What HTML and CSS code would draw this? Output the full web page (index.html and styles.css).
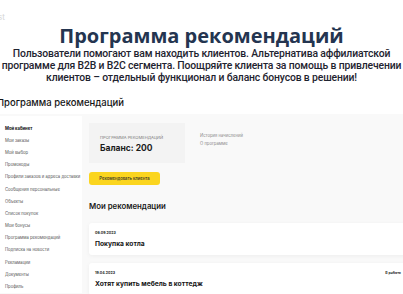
FILE: index.html
```html
<!DOCTYPE html>
<html lang="ru">
<head>
<meta charset="utf-8">
<link rel="stylesheet" href="styles.css">
</head>
<body>
<div class="page">
  <div class="crumb">st</div>
  <h1 class="title">Программа рекомендаций</h1>
  <p class="lead">Пользователи помогают вам находить клиентов. Альтернатива аффилиатской<br>программе для B2B и B2C сегмента. Поощряйте клиента за помощь в привлечении<br>клиентов – отдельный функционал и баланс бонусов в решении!</p>
  <h2 class="section">Программа рекомендаций</h2>
  <div class="layout">
    <nav class="sidebar">
      <a class="nav-item active">Мой кабинет</a>
      <a class="nav-item">Мои заказы</a>
      <a class="nav-item">Мой выбор</a>
      <a class="nav-item">Промокоды</a>
      <a class="nav-item">Профили заказов и адреса доставки</a>
      <a class="nav-item">Сообщения персональные</a>
      <a class="nav-item">Объекты</a>
      <a class="nav-item">Список покупок</a>
      <a class="nav-item">Мои бонусы</a>
      <a class="nav-item">Программа рекомендаций</a>
      <a class="nav-item">Подписка на новости</a>
      <a class="nav-item">Рекламации</a>
      <a class="nav-item">Документы</a>
      <a class="nav-item">Профиль</a>
    </nav>
    <main class="main">
      <div class="top-row">
        <div class="balance">
          <div class="balance-label">Программа рекомендаций</div>
          <div class="balance-value">Баланс: 200</div>
        </div>
        <div class="links">
          <a class="link">История начислений</a>
          <a class="link">О программе</a>
        </div>
      </div>
      <button class="btn">Рекомендовать клиента</button>
      <h3 class="subhead">Мои рекомендации</h3>
      <div class="cards">
        <div class="card">
          <div class="card-meta"><span class="date">06.09.2023</span></div>
          <div class="card-title">Покупка котла</div>
        </div>
        <div class="card">
          <div class="card-meta"><span class="date">19.04.2023</span><span class="status">В работе</span></div>
          <div class="card-title">Хотят купить мебель в коттедж</div>
        </div>
      </div>
    </main>
  </div>
</div>
</body>
</html>
```
FILE: styles.css
```css
* { box-sizing: border-box; margin: 0; padding: 0; }
html, body { width: 403px; height: 294px; overflow: hidden; background: #fff; }
body { font-family: Inter, "Noto Sans", sans-serif; color: #1d1d1f; }

.page { width: 403px; }

.crumb {
  height: 24px;
  padding-top: 12px;
  font-size: 8px;
  line-height: 10px;
  color: #d6d6d6;
  margin-left: -2px;
}

.title {
  font-family: "Open Sans", "Noto Sans", sans-serif;
  font-weight: 700;
  font-size: 20px;
  line-height: 24px;
  text-align: center;
  color: #243550;
}

.lead {
  margin-top: 0;
  font-family: Roboto, "Noto Sans", sans-serif;
  font-weight: 500;
  font-size: 10.4px;
  line-height: 12px;
  text-align: center;
  color: #1f2430;
  letter-spacing: -0.15px;
  white-space: nowrap;
}

.section {
  margin-top: 12px;
  margin-left: -3px;
  font-weight: 500;
  font-size: 9.5px;
  line-height: 14px;
  color: #151515;
}

.layout {
  margin-top: 4px;
  display: flex;
  align-items: flex-start;
  background: #f9f9f9;
  width: 420px;
  min-height: 200px;
}

.sidebar {
  width: 82px;
  flex: none;
  background: #fff;
  margin-top: 2px;
  padding-top: 6px;
  display: flex;
  flex-direction: column;
}

.nav-item {
  height: 12.2px;
  padding-left: 5px;
  font-size: 4.2px;
  color: #555;
  white-space: nowrap;
  display: flex;
  align-items: center;
}
.nav-item.active { font-weight: 700; color: #111; }

.main {
  flex: none;
  width: 325px;
  padding: 9px 0 0 7px;
}

.top-row { display: flex; align-items: flex-start; }

.balance {
  width: 96px;
  height: 40px;
  background: #f3f3f3;
  padding: 12px 0 0 11px;
}
.balance-label {
  font-size: 4.1px;
  line-height: 5px;
  text-transform: uppercase;
  color: #777;
}
.balance-value {
  margin-top: 3px;
  font-weight: 700;
  font-size: 8.5px;
  line-height: 11px;
  color: #1c1c1c;
}

.links {
  margin-left: 15px;
  padding-top: 9px;
  display: flex;
  flex-direction: column;
}
.link {
  font-size: 4.2px;
  line-height: 8px;
  color: #8a8a8a;
}

.btn {
  display: block;
  margin-top: 9px;
  width: 71px;
  height: 13px;
  border: 0;
  border-radius: 3px;
  background: #fbd51f;
  font-family: Inter, "Noto Sans", sans-serif;
  font-size: 4.2px;
  font-weight: 500;
  color: #2a2a2a;
}

.subhead {
  margin-top: 14px;
  font-weight: 600;
  font-size: 7.8px;
  line-height: 14px;
  color: #1a1a1a;
}

.cards {
  margin-top: 10px;
  display: flex;
  flex-direction: column;
  gap: 8px;
}

.card {
  width: 318px;
  height: 32px;
  background: #fff;
  border-radius: 3px;
  box-shadow: 0 1px 4px rgba(0, 0, 0, 0.05);
  padding: 7px 6px 0 6px;
}
.card-meta {
  display: flex;
  justify-content: space-between;
  font-size: 3.6px;
  line-height: 6px;
  font-weight: 700;
  color: #222;
}
.status { font-weight: 600; }
.card-title {
  margin-top: 3px;
  font-weight: 700;
  font-size: 6.7px;
  line-height: 11px;
  color: #151515;
}
```
